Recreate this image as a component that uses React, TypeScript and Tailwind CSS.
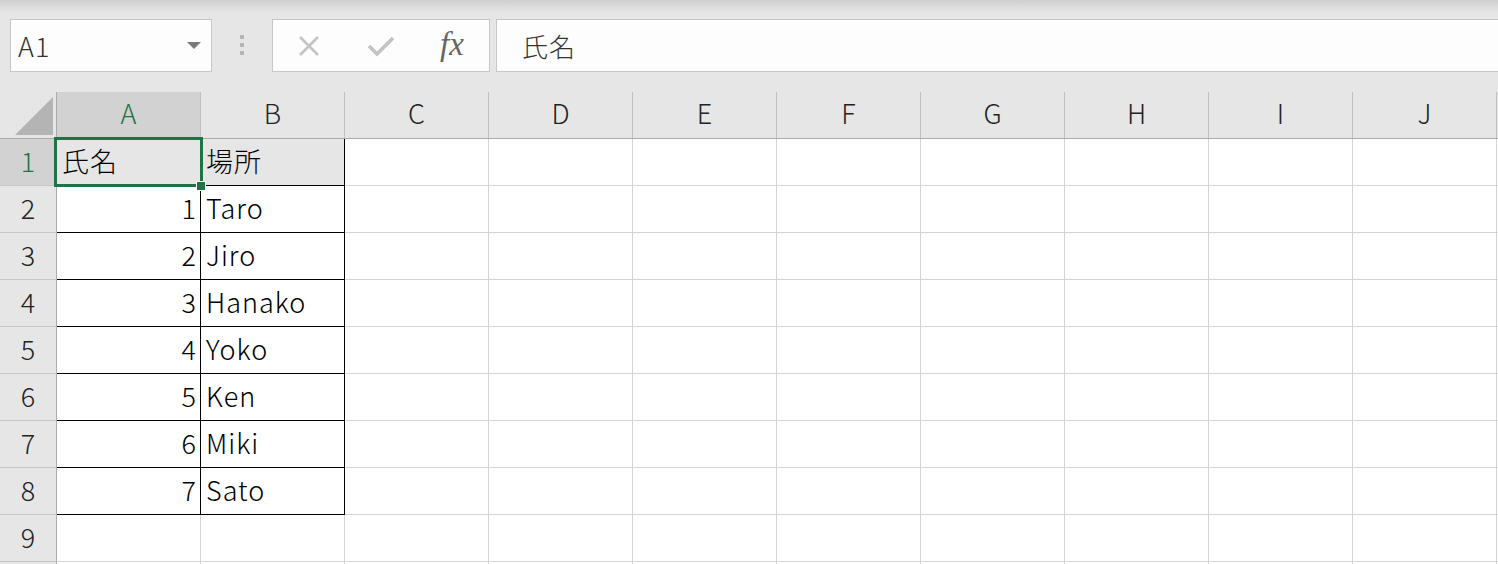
import React from "react";

// Simple spreadsheet view: name box, formula bar and a grid of cells

const COLS = ["A", "B", "C", "D", "E", "F", "G", "H", "I", "J"];
const ROWS = [1, 2, 3, 4, 5, 6, 7, 8, 9];

const data: Record<string, string> = {
  A1: "氏名",
  B1: "場所",
  A2: "1",
  B2: "Taro",
  A3: "2",
  B3: "Jiro",
  A4: "3",
  B4: "Hanako",
  A5: "4",
  B5: "Yoko",
  A6: "5",
  B6: "Ken",
  A7: "6",
  B7: "Miki",
  A8: "7",
  B8: "Sato",
};

const font = {
  fontFamily: '"Noto Sans CJK JP", "Noto Sans", sans-serif',
};

const Toolbar: React.FC = () => (
  <div className="relative h-[92px] bg-[#e6e6e6]">
    <div className="absolute inset-x-0 top-0 h-[12px] bg-gradient-to-b from-[#cfcfcf] to-[#e6e6e6]" />
    <div className="relative flex items-start pt-[19px] pl-[10px]">
      {/* name box */}
      <div className="flex shrink-0 items-center w-[202px] h-[53px] border border-[#c6c6c6] bg-[#fdfdfd] pl-[7px] pr-[10px]">
        <span
          className="flex-1 text-[27px] font-light tracking-[1px] text-[#333] leading-none"
          style={font}
        >
          A1
        </span>
        <svg width="14" height="8" viewBox="0 0 14 8">
          <polygon points="0,0 14,0 7,7" fill="#7a7a7a" />
        </svg>
      </div>
      {/* grip dots */}
      <div className="flex shrink-0 flex-col gap-[4px] ml-[28px] mt-[16px] w-[4px]">
        <div className="w-[4px] h-[4px] bg-[#b4b4b4]" />
        <div className="w-[4px] h-[4px] bg-[#b4b4b4]" />
        <div className="w-[4px] h-[4px] bg-[#b4b4b4]" />
      </div>
      {/* cancel / enter / insert function */}
      <div className="flex shrink-0 items-center ml-[28px] w-[218px] h-[53px] border border-[#c6c6c6] bg-[#fdfdfd]">
        <svg width="22" height="22" viewBox="0 0 22 22" className="ml-[25px]">
          <path d="M2 2 L20 20 M20 2 L2 20" stroke="#c3c3c3" strokeWidth="2.6" />
        </svg>
        <svg width="28" height="22" viewBox="0 0 28 22" className="ml-[47px]">
          <path d="M2 11 L10 19 L26 3" stroke="#c3c3c3" strokeWidth="3.6" fill="none" />
        </svg>
        <span
          className="ml-[45px] -mt-[2px] text-[33px] italic text-[#666] leading-none"
          style={{ fontFamily: '"Liberation Serif", serif' }}
        >
          fx
        </span>
      </div>
      {/* formula bar */}
      <div className="flex shrink-0 items-center ml-[6px] w-[1020px] h-[53px] border border-[#c6c6c6] bg-[#fdfdfd] pl-[25px]">
        <span className="text-[26px] font-light tracking-[1px] text-[#333] leading-none" style={font}>
          氏名
        </span>
      </div>
    </div>
  </div>
);

const HeaderRow: React.FC = () => (
  <div className="flex h-[47px] bg-[#e6e6e6] border-b border-[#ababab]">
    <div className="w-[57px] shrink-0 border-r border-[#ababab] flex items-end justify-end pr-[3px] pb-[3px]">
      <svg width="38" height="38" viewBox="0 0 38 38">
        <polygon points="38,0 38,38 0,38" fill="#b4b4b4" />
      </svg>
    </div>
    {COLS.map((c) => (
      <div
        key={c}
        className={`w-[144px] shrink-0 border-r border-[#bfbfbf] flex items-center justify-center pb-[6px] text-[27px] font-light leading-none ${
          c === "A" ? "bg-[#d2d2d2] text-[#217346]" : "text-[#222]"
        }`}
        style={font}
      >
        {c}
      </div>
    ))}
    <div className="flex-1" />
  </div>
);

function inTable(col: string, row: number) {
  return (col === "A" || col === "B") && row >= 1 && row <= 8;
}

const Cell: React.FC<{ col: string; row: number }> = ({ col, row }) => {
  const key = `${col}${row}`;
  const value = data[key];
  const numeric = value !== undefined && /^\d+$/.test(value);
  const framed = inTable(col, row);
  const fill = row === 1 && framed ? "bg-[#e6e6e6]" : "bg-white";

  return (
    <div
      className={`relative w-[144px] shrink-0 border-r border-b ${fill} ${
        framed ? "border-r-black border-b-black" : "border-r-[#d4d4d4] border-b-[#d4d4d4]"
      } flex items-center pb-[4px] ${
        numeric ? "justify-end pr-[4px]" : "justify-start pl-[5px] tracking-[1px]"
      } text-[27px] font-light text-black leading-none`}
      style={font}
    >
      <span>{value}</span>
      {key === "A1" && (
        <>
          <div className="absolute z-10 -left-[3px] -top-[2px] -right-[3px] -bottom-[2px] border-[3px] border-[#217346]" />
          <div className="absolute z-10 -right-[6px] -bottom-[6px] w-[10px] h-[10px] bg-[#217346] border border-white" />
        </>
      )}
    </div>
  );
};

const GridRow: React.FC<{ row: number }> = ({ row }) => (
  <div className="flex h-[47px]">
    <div
      className={`w-[57px] shrink-0 border-r border-b border-r-[#ababab] border-b-[#c6c6c6] flex items-center justify-center pb-[4px] text-[27px] font-light leading-none ${
        row === 1 ? "bg-[#d2d2d2] text-[#217346]" : "bg-[#e6e6e6] text-[#222]"
      }`}
      style={font}
    >
      {row}
    </div>
    {COLS.map((c) => (
      <Cell key={c} col={c} row={row} />
    ))}
    <div className="flex-1 bg-white border-b border-[#d4d4d4]" />
  </div>
);

// partially visible row below the last numbered one
const TailRow: React.FC = () => (
  <div className="flex h-[47px]">
    <div className="w-[57px] shrink-0 border-r border-[#ababab] bg-[#e6e6e6]" />
    {COLS.map((c) => (
      <div key={c} className="w-[144px] shrink-0 border-r border-[#d4d4d4] bg-white" />
    ))}
    <div className="flex-1 bg-white" />
  </div>
);

export default function App() {
  return (
    <div className="w-[1498px] h-[564px] overflow-hidden bg-white">
      <Toolbar />
      <HeaderRow />
      {ROWS.map((r) => (
        <GridRow key={r} row={r} />
      ))}
      <TailRow />
    </div>
  );
}
